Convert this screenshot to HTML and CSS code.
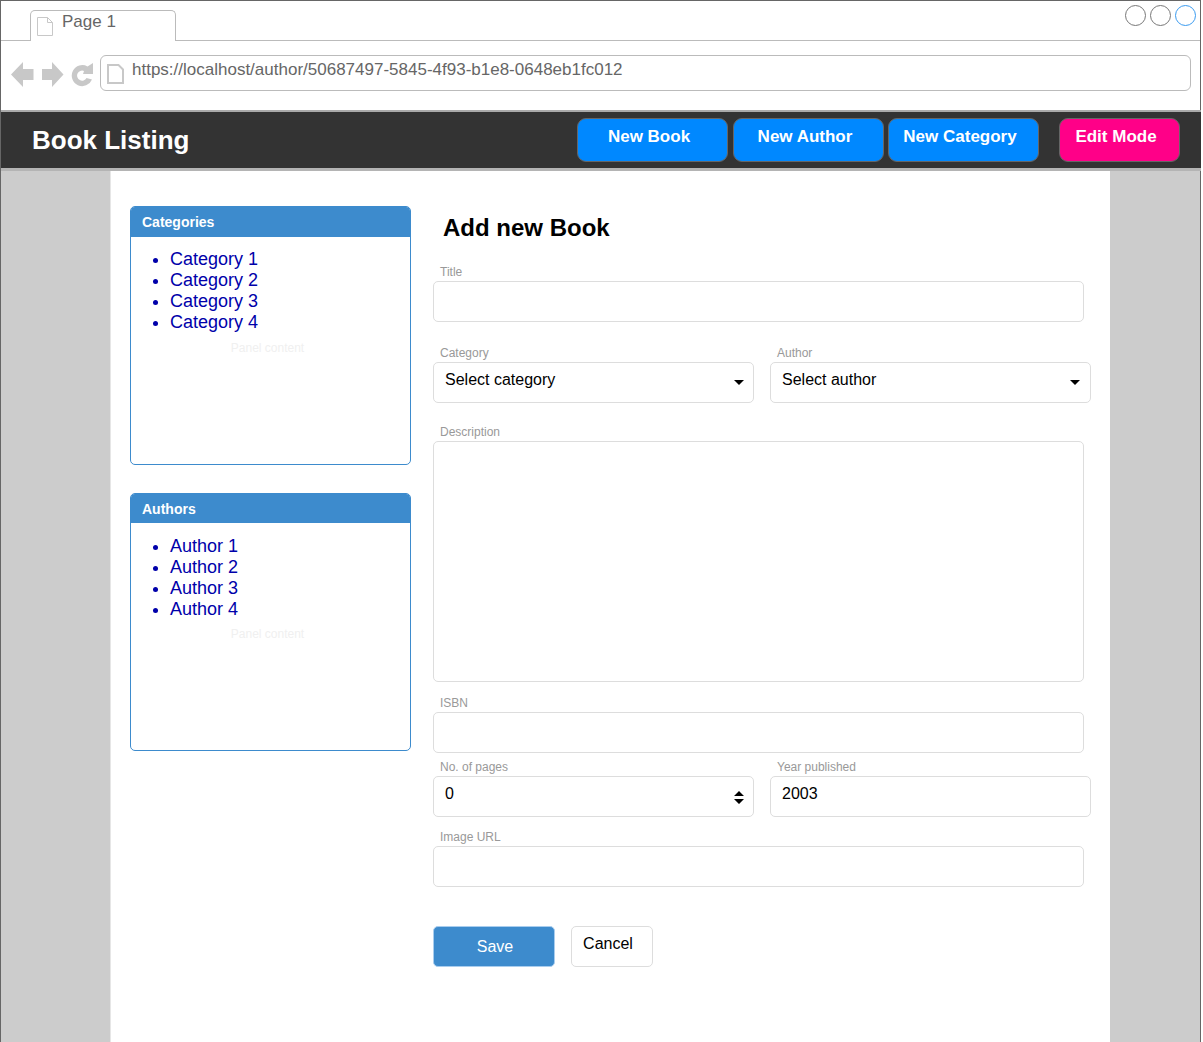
FILE: index.html
```html
<!DOCTYPE html>
<html lang="en">
<head>
    <meta charset="UTF-8">
    <meta name="viewport" content="width=device-width, initial-scale=1.0">
    <title>Book Listing</title>
    <link rel="stylesheet" href="styles.css">
</head>
<body>
    <div class="window">
        <div class="tabbar">
            <div class="tab">
                <svg class="tab-icon" width="16" height="19" viewBox="0 0 16 19"><path d="M.5 .5H10.500L15.500 5.500V18.500H.5Z M10.500 .5V5.500H15.500" fill="#fff" stroke="#c8c8c8"/></svg>
                <span class="tab-label">Page 1</span>
            </div>
            <div class="window-buttons">
                <span class="circle"></span>
                <span class="circle"></span>
                <span class="circle circle-blue"></span>
            </div>
        </div>

        <div class="toolbar">
            <svg class="nav-icons" width="84" height="27" viewBox="0 0 84 27">
                <path d="M0 13.500L12 1V8H22.500V19H12V26Z" fill="#c8c8c8"/>
                <path d="M52.500 13.500L41 1V8H31V19H41V26Z" fill="#c8c8c8"/>
                <path d="M81 18.500A10.500 10.500 0 1 1 76.500 5.500L82 2V13H72L73 10A5 5 0 1 0 75.500 17Z" fill="#c8c8c8"/>
            </svg>
            <div class="address">
                <svg class="address-icon" width="17" height="20" viewBox="0 0 17 20"><path d="M1 1H11.500L16 5.500V19H1Z" fill="#fff" stroke="#c8c8c8" stroke-width="2"/></svg>
                <span class="address-text">https://localhost/author/50687497-5845-4f93-b1e8-0648eb1fc012</span>
            </div>
        </div>

        <nav class="navbar">
            <div class="brand">Book Listing</div>
            <a class="nav-btn btn-book">New Book</a>
            <a class="nav-btn btn-author">New Author</a>
            <a class="nav-btn btn-category">New Category</a>
            <a class="nav-btn btn-edit">Edit Mode</a>
        </nav>

        <div class="page">
            <aside class="sidebar">
                <div class="panel">
                    <div class="panel-heading">Categories</div>
                    <ul class="panel-list">
                        <li>Category 1</li>
                        <li>Category 2</li>
                        <li>Category 3</li>
                        <li>Category 4</li>
                    </ul>
                    <div class="panel-content">Panel content</div>
                </div>
                <div class="panel panel-authors">
                    <div class="panel-heading">Authors</div>
                    <ul class="panel-list">
                        <li>Author 1</li>
                        <li>Author 2</li>
                        <li>Author 3</li>
                        <li>Author 4</li>
                    </ul>
                    <div class="panel-content">Panel content</div>
                </div>
            </aside>

            <main class="form-area">
                <h1 class="form-title">Add new Book</h1>

                <div class="field field-title">
                    <label class="field-label">Title</label>
                    <input class="control control-full" type="text">
                </div>

                <div class="field-row row-selects">
                    <div class="field">
                        <label class="field-label">Category</label>
                        <div class="control-wrap">
                            <select class="control control-half">
                                <option>Select category</option>
                            </select>
                            <svg class="caret" width="10" height="6" viewBox="0 0 10 6"><path d="M0 0H10L5 5Z" fill="#000"/></svg>
                        </div>
                    </div>
                    <div class="field">
                        <label class="field-label">Author</label>
                        <div class="control-wrap">
                            <select class="control control-half">
                                <option>Select author</option>
                            </select>
                            <svg class="caret caret-author" width="10" height="6" viewBox="0 0 10 6"><path d="M0 0H10L5 5Z" fill="#000"/></svg>
                        </div>
                    </div>
                </div>

                <div class="field field-description">
                    <label class="field-label">Description</label>
                    <textarea class="control control-full control-area"></textarea>
                </div>

                <div class="field field-isbn">
                    <label class="field-label">ISBN</label>
                    <input class="control control-full" type="text">
                </div>

                <div class="field-row row-numbers">
                    <div class="field">
                        <label class="field-label">No. of pages</label>
                        <div class="control-wrap">
                            <input class="control control-half" type="text" value="0">
                            <svg class="spinner" width="10" height="13" viewBox="0 0 10 13"><path d="M5 0L10 5H0Z M0 8H10L5 13Z" fill="#000"/></svg>
                        </div>
                    </div>
                    <div class="field">
                        <label class="field-label">Year published</label>
                        <input class="control control-half" type="text" value="2003">
                    </div>
                </div>

                <div class="field field-image">
                    <label class="field-label">Image URL</label>
                    <input class="control control-full" type="text">
                </div>

                <div class="form-actions">
                    <button class="btn-save" type="button">Save</button>
                    <button class="btn-cancel" type="button">Cancel</button>
                </div>
            </main>
        </div>
    </div>
</body>
</html>
```

FILE: styles.css
```css
html, body {
    margin: 0;
    padding: 0;
}
body {
    font-family: "Liberation Sans", Arial, sans-serif;
    background: #fff;
    overflow: hidden;
}
.window {
    box-sizing: border-box;
    width: 1201px;
    height: 1042px;
    border: 1px solid #666;
    border-bottom: none;
    background: #ccc;
}

/* browser chrome */
.tabbar {
    box-sizing: border-box;
    height: 40px;
    background: #fff;
    border-bottom: 1px solid #bbb;
    display: flex;
    justify-content: space-between;
    padding-left: 29px;
}
.tab {
    box-sizing: border-box;
    width: 146px;
    height: 31px;
    margin-top: 9px;
    background: #fff;
    border: 1px solid #bbb;
    border-bottom: none;
    border-radius: 5px 5px 0 0;
    display: flex;
    align-items: flex-start;
    padding: 6px 0 0 6px;
}
.tab-label {
    margin-left: 9px;
    margin-top: -5px;
    font-size: 17px;
    line-height: 20px;
    color: #666;
}
.window-buttons {
    display: flex;
    gap: 4px;
    padding: 4px 4px 0 0;
}
.circle {
    box-sizing: border-box;
    width: 21px;
    height: 21px;
    border: 1px solid #777;
    border-radius: 50%;
}
.circle-blue {
    border-color: #3a9bf0;
}
.toolbar {
    box-sizing: border-box;
    height: 69px;
    background: #fff;
    display: flex;
    padding: 14px 0 0 10px;
}
.nav-icons {
    flex: none;
    margin: 6px 5px 0 0;
}
.address {
    box-sizing: border-box;
    width: 1091px;
    height: 36px;
    flex: none;
    border: 1px solid #bbb;
    border-radius: 6px;
    display: flex;
    align-items: flex-start;
    padding: 8px 0 0 6px;
}
.address-text {
    margin-left: 8px;
    margin-top: -4px;
    font-size: 17px;
    line-height: 20px;
    color: #666;
}

/* app navbar */
.navbar {
    box-sizing: border-box;
    height: 61px;
    margin-right: -1px;
    background: #333;
    border-top: 2px solid #aaa;
    border-bottom: 3px solid #b4b4b4;
    display: flex;
    align-items: flex-start;
    padding: 6px 21px 0 31px;
}
.brand {
    flex: 1;
    font-size: 26px;
    line-height: 31px;
    font-weight: bold;
    color: #fff;
    padding-top: 7px;
}
.nav-btn {
    box-sizing: border-box;
    height: 44px;
    background: #08f;
    border: 1px solid #666;
    border-radius: 9px;
    font-size: 17px;
    line-height: 20px;
    font-weight: bold;
    color: #fff;
    text-align: center;
    padding: 8px 7px 0 0;
}
.btn-book {
    width: 151px;
}
.btn-author {
    width: 151px;
    margin-left: 5px;
}
.btn-category {
    width: 151px;
    margin-left: 4px;
}
.btn-edit {
    width: 121px;
    margin-left: 20px;
    background: #f08;
}

/* page body */
.page {
    box-sizing: border-box;
    width: 1000px;
    height: 871px;
    margin-left: 109px;
    background: #fff;
    border-left: 1px solid #e6e6e6;
    display: flex;
    padding: 35px 0 0 19px;
}
.sidebar {
    flex: none;
    width: 281px;
    display: flex;
    flex-direction: column;
    gap: 28px;
}
.panel {
    box-sizing: border-box;
    height: 259px;
    border: 1px solid #3d8bcd;
    border-radius: 5px;
    overflow: hidden;
}
.panel-authors {
    height: 258px;
}
.panel-heading {
    height: 30px;
    background: #3d8bcd;
    color: #fff;
    font-size: 14px;
    line-height: 30px;
    font-weight: bold;
    padding-left: 11px;
}
.panel-authors .panel-heading {
    height: 29px;
}
.panel-list {
    margin: 12px 0 0;
    padding: 0 0 0 39px;
    list-style: disc;
    font-size: 18px;
    line-height: 21px;
    color: #00a;
}
.panel-authors .panel-list {
    margin-top: 13px;
}
.panel-content {
    margin-top: 9px;
    margin-right: 6px;
    text-align: center;
    font-size: 12px;
    line-height: 13px;
    color: #f0f0f0;
}
.panel-authors .panel-content {
    margin-top: 8px;
}

/* form */
.form-area {
    margin-left: 22px;
    flex: 1;
}
.form-title {
    margin: 0 0 0 10px;
    padding-top: 8px;
    font-size: 24px;
    line-height: 28px;
    font-weight: bold;
    color: #000;
}
.field-label {
    display: block;
    height: 13px;
    margin-left: 7px;
    margin-bottom: 2px;
    font-size: 12px;
    line-height: 13px;
    color: #999;
}
.field-title {
    margin-top: 24px;
}
.row-selects {
    margin-top: 25px;
}
.field-description {
    margin-top: 23px;
}
.field-isbn {
    margin-top: 15px;
}
.row-numbers {
    margin-top: 8px;
}
.field-image {
    margin-top: 14px;
}
.field-row {
    display: flex;
    gap: 16px;
}
.control-wrap {
    position: relative;
}
.control {
    display: block;
    box-sizing: border-box;
    height: 41px;
    margin: 0;
    background: #fff;
    border: 1px solid #ddd;
    border-radius: 5px;
    outline: none;
    appearance: none;
    font-family: inherit;
    font-size: 16px;
    color: #000;
    padding: 0 11px 6px;
}
.control-full {
    width: 651px;
}
.control-half {
    width: 321px;
}
.control-area {
    height: 241px;
    resize: none;
}
.caret {
    position: absolute;
    right: 10px;
    top: 18px;
}
.caret-author {
    right: 11px;
}
.spinner {
    position: absolute;
    right: 10px;
    top: 15px;
}
.form-actions {
    display: flex;
    gap: 16px;
    margin-top: 39px;
}
.btn-save {
    box-sizing: border-box;
    width: 122px;
    height: 41px;
    background: #3d8bcd;
    border: 1px solid #a9cdee;
    border-radius: 5px;
    color: #fff;
    font-family: inherit;
    font-size: 16px;
    padding: 0 0 0 2px;
}
.btn-cancel {
    box-sizing: border-box;
    width: 82px;
    height: 41px;
    background: #fff;
    border: 1px solid #ddd;
    border-radius: 5px;
    color: #000;
    font-family: inherit;
    font-size: 16px;
    padding: 0 8px 5px 0;
}
```
